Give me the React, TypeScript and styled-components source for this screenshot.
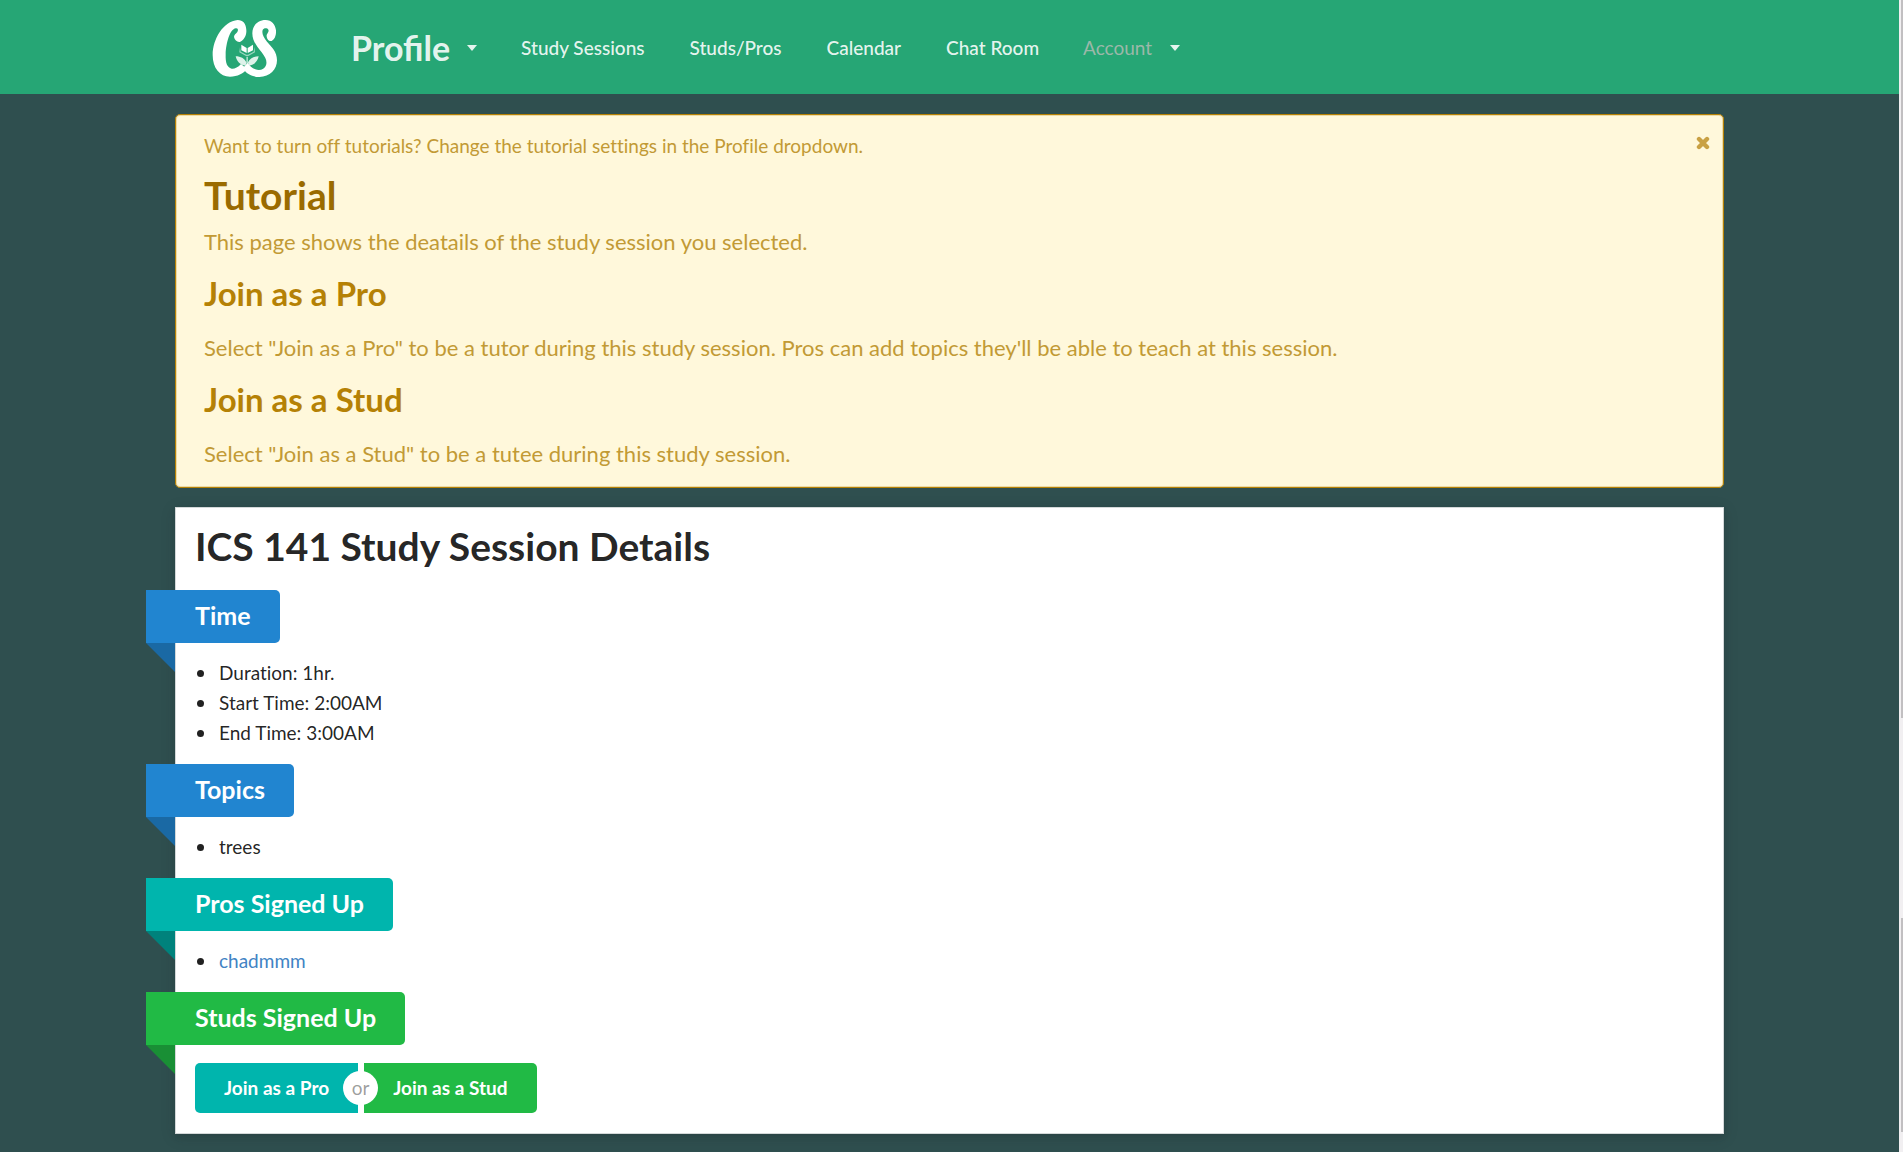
import React, { useState } from "react";
import styled, { createGlobalStyle } from "styled-components";

const GlobalStyle = createGlobalStyle`
  *, *::before, *::after { box-sizing: border-box; }
  html, body { margin: 0; }
  body {
    background: #2f4f4f;
    color: rgba(0, 0, 0, 0.87);
    font-family: Lato, "Liberation Sans", sans-serif;
    font-size: 19px;
    line-height: 28px;
    font-variant-ligatures: none;
  }
  h1, h2, h3, p, ul { margin: 0; padding: 0; }
  button { font-family: inherit; border: 0; cursor: pointer; }
`;

const Page = styled.div`
  display: flex;
  min-height: 100vh;
`;

const Body = styled.div`
  flex: 1;
  min-width: 0;
`;

const ScrollTrack = styled.div`
  width: 4px;
  padding-left: 2px;
  background: #f1eff1;
  display: flex;
  flex-direction: column;
  justify-content: space-between;
`;

const ScrollThumb = styled.div<{ $size: number; $end?: number }>`
  height: ${(p) => p.$size}px;
  margin-bottom: ${(p) => p.$end ?? 0}px;
  background: #c1bfc1;
`;

const Header = styled.header`
  background: #26a675;
`;

const Container = styled.div`
  max-width: 1549px;
  margin: 0 auto;
`;

const Nav = styled.nav`
  display: flex;
  align-items: center;
  height: 94px;
  padding: 1px 0 0 30px;
`;

const Brand = styled.a`
  display: flex;
  margin-right: 44px;
`;

const NavLink = styled.a`
  padding: 0 22px;
  color: rgba(255, 255, 255, 0.9);
  font-size: 19px;
  font-weight: 500;
  line-height: 30px;
  text-decoration: none;
  white-space: nowrap;

  & + & {
    padding-left: 23px;
  }
`;

const NavMenu = styled.button<{ $title?: boolean }>`
  display: flex;
  align-items: center;
  gap: ${(p) => (p.$title ? 17 : 18)}px;
  padding: 0 22px;
  background: transparent;
  color: ${(p) => (p.$title ? "rgba(255, 255, 255, 0.9)" : "#9bb8a9")};
  font-size: ${(p) => (p.$title ? 34 : 19)}px;
  font-weight: ${(p) => (p.$title ? 700 : 400)};
  font-variant-ligatures: common-ligatures;
  line-height: 40px;
`;

const Caret = styled.span`
  border: solid transparent;
  border-width: 6px 5px 0;
  border-top-color: rgba(255, 255, 255, 0.88);
`;

const Main = styled.main`
  display: flex;
  flex-direction: column;
  gap: 19px;
  padding: 20px 0 18px;
`;

const Message = styled.section`
  position: relative;
  padding: 17px 28px;
  border: 1px solid #b58105;
  border-radius: 5px;
  background: #fff8db;
  color: #c29a35;
  box-shadow: inset 0 0 0 1px rgba(181, 129, 5, 0.25);
`;

const Close = styled.button`
  position: absolute;
  top: 21px;
  right: 13px;
  display: flex;
  padding: 0;
  background: transparent;
  color: #c9a144;
`;

const Title = styled.h1`
  color: #9a6b00;
  font-size: 39px;
  font-weight: 700;
  line-height: 50px;
  margin: 10px 0 6px;
`;

const Subtitle = styled.h2`
  color: #b58105;
  font-size: 33px;
  font-weight: 700;
  line-height: 42px;
  margin: 14px 0 18px;
`;

const Lead = styled.p`
  font-size: 22px;
  line-height: 32px;
`;

const Hint = styled.p`
  font-size: 19px;
  line-height: 28px;
`;

const Segment = styled.section`
  padding: 13px 19px 20px;
  border: 1px solid #d4d8d9;
  background: #fff;
  box-shadow: 0 3px 5px rgba(34, 36, 38, 0.12), 0 3px 14px rgba(34, 36, 38, 0.15);
`;

const SegmentTitle = styled.h1`
  font-size: 39px;
  font-weight: 700;
  line-height: 50px;
  margin-bottom: 19px;
`;

const tones = {
  blue: ["#2185d0", "#1a69a4"],
  teal: ["#00b5ad", "#00827c"],
  green: ["#21ba45", "#198f35"],
};

type Tone = keyof typeof tones;

const Ribbon = styled.h3<{ $tone: Tone }>`
  position: relative;
  width: max-content;
  margin: 16px 0 15px -49px;
  padding: 0 29px 2px 49px;
  border-radius: 0 5px 5px 0;
  background: ${(p) => tones[p.$tone][0]};
  color: #fff;
  font-size: 25px;
  font-weight: 700;
  line-height: 51px;

  &::after {
    content: "";
    position: absolute;
    top: 100%;
    left: 0;
    border: solid transparent;
    border-width: 0 29px 29px 0;
    border-right-color: ${(p) => tones[p.$tone][1]};
  }
`;

const List = styled.ul`
  list-style: none;
`;

const Item = styled.li`
  display: flex;
  align-items: center;
  gap: 15px;
  font-size: 19px;
  line-height: 30px;
  padding-left: 2px;

  &::before {
    content: "";
    width: 7px;
    height: 7px;
    border-radius: 50%;
    background: #212121;
  }
`;

const UserLink = styled.a`
  color: #4183c4;
  text-decoration: none;
`;

const Choice = styled.div`
  display: flex;
  margin-top: 18px;
`;

const JoinButton = styled.button<{ $tone: Tone; $last?: boolean }>`
  padding: 0 29px;
  border-radius: ${(p) => (p.$last ? "0 5px 5px 0" : "5px 0 0 5px")};
  background: ${(p) => tones[p.$tone][0]};
  color: #fff;
  font-size: 19px;
  font-weight: 700;
  line-height: 50px;
`;

const Or = styled.span`
  position: relative;
  width: 6px;

  &::before {
    content: "or";
    position: absolute;
    top: 8px;
    left: 50%;
    width: 35px;
    margin-left: -18px;
    border-radius: 50%;
    background: #fff;
    color: rgba(0, 0, 0, 0.4);
    font-size: 19px;
    line-height: 34px;
    text-align: center;
  }
`;

const Logo = () => (
  <svg width="80" height="76" viewBox="0 -3 240 228" fill="#fff" aria-hidden="true">
    <path d="M98 27C55 30 23 85 23 132C23 172 45 197 75 197C98 197 114 188 126 174L108 159C98 170 88 174 80 173C66 170 61 155 62 130C63 95 75 55 92 52C99 51 101 57 97 63C93 69 87 71 87 78C89 88 98 95 106 92C120 85 125 70 124 57C123 38 114 27 98 27Z" />
    <path d="M182 27C158 27 142 44 142 67C142 92 158 108 170 124C182 140 187 150 183 163C179 176 163 180 151 175C141 171 134 164 128 156L113 172C125 190 143 198 163 198C195 198 216 175 216 148C216 122 200 108 186 92C175 79 170 68 173 57C176 50 187 50 190 56C193 61 187 66 185 72C184 82 191 92 200 90C209 86 214 73 213 58C211 40 200 27 182 27Z" />
    <path d="M109 101L125 111V126L109 118ZM144 101L128 111V126L144 118Z" />
    <path d="M105 108L107 122L124 131H129L146 122L148 108L150 124L130 135H123L103 124Z" opacity="0.55" />
    <path d="M92 136C107 136 119 143 124 154L122 164C106 163 95 151 92 136ZM161 136C146 136 134 143 129 154L131 164C147 163 158 151 161 136Z" opacity="0.85" />
    <path d="M124 137H129V164H124Z" opacity="0.6" />
  </svg>
);

const CloseIcon = () => (
  <svg width="14" height="14" viewBox="0 0 14 14" aria-hidden="true">
    <path d="M3 3L11 11M11 3L3 11" stroke="currentColor" strokeWidth="4.4" strokeLinecap="round" />
  </svg>
);

const sections: { name: string; tone: Tone; items: string[]; links?: boolean }[] = [
  { name: "Time", tone: "blue", items: ["Duration: 1hr.", "Start Time: 2:00AM", "End Time: 3:00AM"] },
  { name: "Topics", tone: "blue", items: ["trees"] },
  { name: "Pros Signed Up", tone: "teal", items: ["chadmmm"], links: true },
  { name: "Studs Signed Up", tone: "green", items: [] },
];

export default function App() {
  const [showTutorial, setShowTutorial] = useState(true);
  return (
    <>
      <GlobalStyle />
      <Page>
        <Body>
          <Header>
            <Container>
              <Nav>
                <Brand href="#" aria-label="Home"><Logo /></Brand>
                <NavMenu $title>Profile<Caret /></NavMenu>
                {["Study Sessions", "Studs/Pros", "Calendar", "Chat Room"].map((t) => (
                  <NavLink key={t} href="#">{t}</NavLink>
                ))}
                <NavMenu>Account<Caret /></NavMenu>
              </Nav>
            </Container>
          </Header>
          <Container>
            <Main>
              {showTutorial && (
                <Message>
                  <Close aria-label="Close" onClick={() => setShowTutorial(false)}><CloseIcon /></Close>
                  <Hint>Want to turn off tutorials? Change the tutorial settings in the Profile dropdown.</Hint>
                  <Title>Tutorial</Title>
                  <Lead>This page shows the deatails of the study session you selected.</Lead>
                  <Subtitle>Join as a Pro</Subtitle>
                  <Lead>Select "Join as a Pro" to be a tutor during this study session. Pros can add topics they'll be able to teach at this session.</Lead>
                  <Subtitle>Join as a Stud</Subtitle>
                  <Lead>Select "Join as a Stud" to be a tutee during this study session.</Lead>
                </Message>
              )}
              <Segment>
                <SegmentTitle>ICS 141 Study Session Details</SegmentTitle>
                {sections.map((s) => (
                  <React.Fragment key={s.name}>
                    <Ribbon $tone={s.tone}>{s.name}</Ribbon>
                    {s.items.length > 0 && (
                      <List>
                        {s.items.map((t) => (
                          <Item key={t}>{s.links ? <UserLink href="#">{t}</UserLink> : t}</Item>
                        ))}
                      </List>
                    )}
                  </React.Fragment>
                ))}
                <Choice>
                  <JoinButton $tone="teal">Join as a Pro</JoinButton>
                  <Or />
                  <JoinButton $tone="green" $last>Join as a Stud</JoinButton>
                </Choice>
              </Segment>
            </Main>
          </Container>
        </Body>
        <ScrollTrack aria-hidden="true">
          <ScrollThumb $size={718} />
          <ScrollThumb $size={214} $end={20} />
        </ScrollTrack>
      </Page>
    </>
  );
}
